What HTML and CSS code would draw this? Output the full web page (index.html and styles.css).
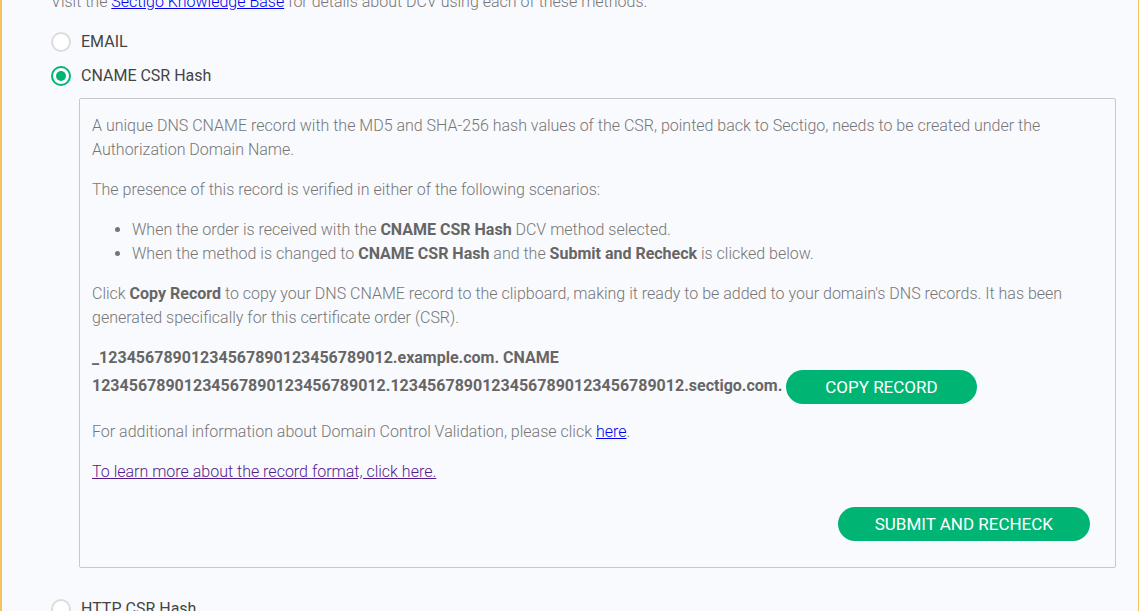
FILE: index.html
```html
<!doctype html>
<html>
<head>
  <title>Domain Control Validation</title>
  <link rel="stylesheet" href="styles.css">
</head>
<body>
<div class="panel">
	<p class="intro">Visit the <a href="#">Sectigo Knowledge Base</a> for details about DCV using each of these methods.</p>

	<label class="method">
		<span class="radio"></span>
		<span class="method-name">EMAIL</span>
	</label>
	<label class="method">
		<span class="radio checked"></span>
		<span class="method-name">CNAME CSR Hash</span>
	</label>

	<div class="method-box">
		<p>A unique DNS CNAME record with the MD5 and SHA-256 hash values of the CSR, pointed back to Sectigo, needs to be created under the Authorization Domain Name.</p>
		<p>The presence of this record is verified in either of the following scenarios:</p>
		<ul>
			<li>When the order is received with the <b>CNAME CSR Hash</b> DCV method selected.</li>
			<li>When the method is changed to <b>CNAME CSR Hash</b> and the <b>Submit and Recheck</b> is clicked below.</li>
		</ul>
		<p>Click <b>Copy Record</b> to copy your DNS CNAME record to the clipboard, making it ready to be added to your domain's DNS records. It has been generated specifically for this certificate order (CSR).</p>
		<p class="record"><b>_12345678901234567890123456789012.example.com. CNAME 12345678901234567890123456789012.12345678901234567890123456789012.sectigo.com.</b> <button class="btn btn-copy">COPY RECORD</button></p>
		<p>For additional information about Domain Control Validation, please click <a href="#">here</a>.</p>
		<p class="last"><a class="visited" href="#">To learn more about the record format, click here.</a></p>
		<div class="actions">
			<button class="btn btn-submit">SUBMIT AND RECHECK</button>
		</div>
	</div>

	<label class="method">
		<span class="radio"></span>
		<span class="method-name">HTTP CSR Hash</span>
	</label>
</div>
</body>
</html>
```
FILE: styles.css
```css
*,
*:before,
*:after {
	box-sizing: border-box;
}

body {
	margin: 0;
	background-color: #f9fafe;
	font-family: "Roboto", sans-serif;
	font-size: 16px;
	font-weight: 300;
	line-height: 24px;
	color: #767676;
	overflow: hidden;
}

.panel {
	margin-top: -10px;
	min-height: 640px;
	padding: 0 22px 0 49px;
	border-left: 2px solid #f6c25d;
	border-right: 1px solid #f6c25d;
}

p {
	margin: 0 0 16px;
}

b {
	font-weight: 700;
	color: #666;
}

a {
	color: #0000ee;
}

a.visited {
	color: #551a8b;
}

.intro {
	margin-bottom: 11px;
}

.method {
	display: flex;
	align-items: center;
	height: 34px;
}

.radio {
	width: 20px;
	height: 20px;
	border: 2px solid #dcdcdc;
	border-radius: 50%;
	background: #fff;
	display: flex;
	align-items: center;
	justify-content: center;
}

.radio.checked {
	border-color: #00b574;
}

.radio.checked:after {
	content: "";
	width: 10px;
	height: 10px;
	border-radius: 50%;
	background: #00b574;
}

.method-name {
	margin-left: 10px;
	font-weight: 400;
	color: #444;
}

.method-box {
	margin: 5px 0 24px 28px;
	padding: 15px 12px 26px;
	border: 1px solid #c8c8c8;
	border-radius: 2px;
}

ul {
	margin: 0 0 16px;
	padding-left: 40px;
}

.btn {
	display: inline-block;
	height: 34px;
	padding: 0 36px;
	border: none;
	border-radius: 17px;
	background-color: #00b574;
	color: #fff;
	font-family: inherit;
	font-size: 17px;
	font-weight: 400;
	vertical-align: middle;
}

.btn-copy {
	padding: 0 39px;
}

.btn-submit {
	padding: 0 37px;
}

.last {
	margin-bottom: 0;
}

.actions {
	display: flex;
	justify-content: flex-end;
	margin-top: 23px;
	padding-right: 13px;
}
```
